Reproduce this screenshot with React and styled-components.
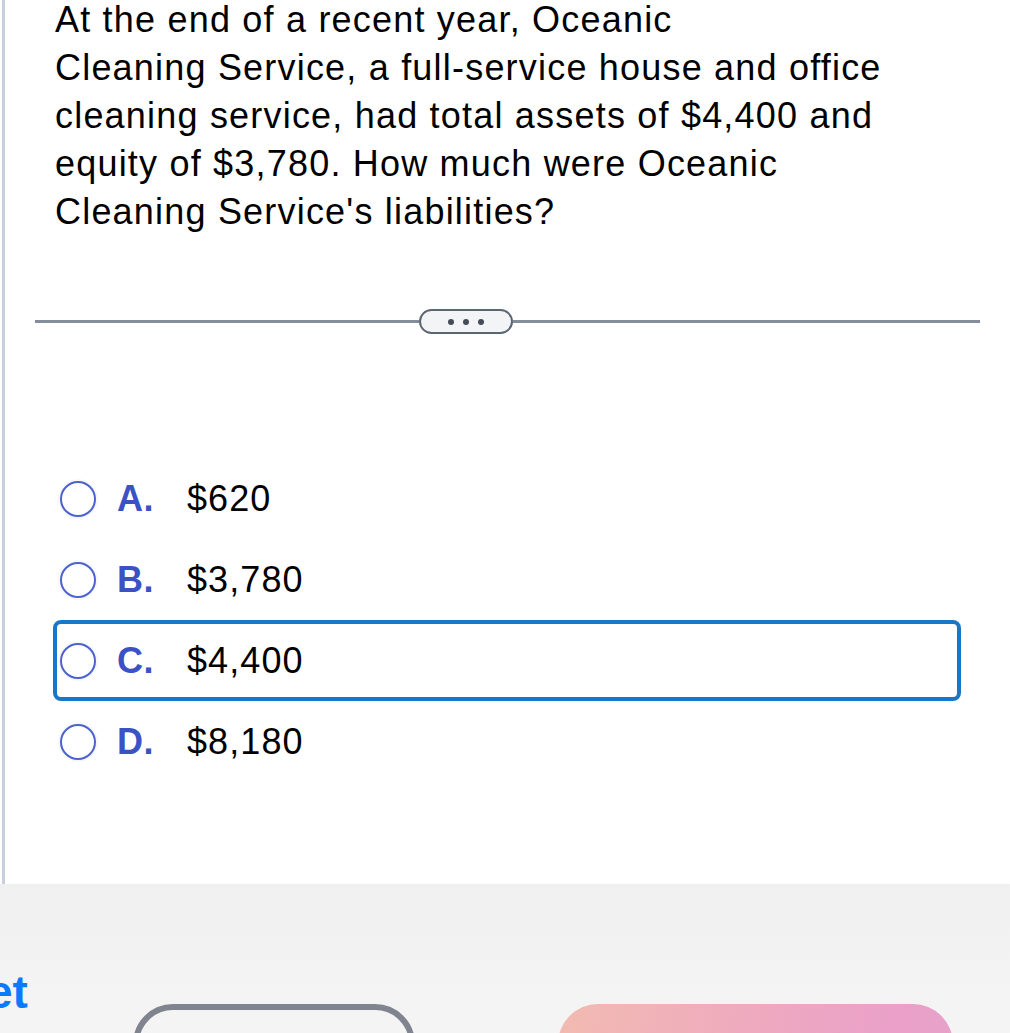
import React, { useState } from "react";
import styled, { createGlobalStyle } from "styled-components";

const GlobalStyle = createGlobalStyle`
  html, body {
    margin: 0;
    padding: 0;
    background: #ffffff;
    font-family: "Liberation Sans", Arial, Helvetica, sans-serif;
  }
`;

const choices = [
  { key: "A", value: "$620" },
  { key: "B", value: "$3,780" },
  { key: "C", value: "$4,400" },
  { key: "D", value: "$8,180" },
];

const App = () => {
  const [focused, setFocused] = useState("C");

  return (
    <>
      <GlobalStyle />
      <Page>
        <Main>
          <Question>
            At the end of a recent year, Oceanic
            <br />
            Cleaning Service, a full-service house and office
            <br />
            cleaning service, had total assets of $4,400 and
            <br />
            equity of $3,780. How much were Oceanic
            <br />
            Cleaning Service's liabilities?
          </Question>

          {/* divider with the expand pill */}
          <Divider>
            <Rule $fixed />
            <MorePill type="button" aria-label="more">
              <Dot />
              <Dot />
              <Dot />
            </MorePill>
            <Rule />
          </Divider>

          <Options>
            {choices.map((c) => (
              <Option
                key={c.key}
                $active={focused === c.key}
                onClick={() => setFocused(c.key)}
              >
                <Radio />
                <Letter>{c.key}.</Letter>
                <Value>{c.value}</Value>
              </Option>
            ))}
          </Options>
        </Main>

        <Footer>
          <Heading>et</Heading>
          <ButtonRow>
            <GhostButton type="button" />
            <GradientButton type="button" />
          </ButtonRow>
        </Footer>
      </Page>
    </>
  );
};

export default App;

const Page = styled.div`
  width: 1010px;
  height: 1033px;
  overflow: hidden;
  display: flex;
  flex-direction: column;
`;

const Main = styled.div`
  flex: none;
  height: 884px;
  margin-left: 2px;
  border-left: 3px solid #c9cfde;
  box-sizing: border-box;
  display: flex;
  flex-direction: column;
`;

const Question = styled.p`
  margin: -4px 0 0 50px;
  font-size: 36px;
  line-height: 48px;
  letter-spacing: 1.2px;
  color: #000;
  white-space: nowrap;
`;

const Divider = styled.div`
  margin: 73px 0 0 30px;
  width: 945px;
  height: 25px;
  display: flex;
  align-items: center;
`;

const Rule = styled.div`
  height: 3px;
  background: #858d9d;
  ${(p) => (p.$fixed ? "width: 384px; flex: none;" : "flex: 1;")}
`;

const MorePill = styled.button`
  width: 94px;
  height: 25px;
  box-sizing: border-box;
  border: 2px solid #5b6675;
  border-radius: 13px;
  background: #f3f4f6;
  display: flex;
  align-items: center;
  justify-content: center;
  gap: 9px;
  padding: 0;
`;

const Dot = styled.span`
  width: 6px;
  height: 6px;
  border-radius: 50%;
  background: #454c57;
`;

const Options = styled.div`
  margin: 124px 0 0 48px;
  width: 908px;
  display: flex;
  flex-direction: column;
`;

const Option = styled.div`
  height: 81px;
  box-sizing: border-box;
  border: 4px solid ${(p) => (p.$active ? "#1778c9" : "transparent")};
  border-radius: 8px;
  display: flex;
  align-items: center;
  padding-left: 3px;
  cursor: pointer;
`;

const Radio = styled.span`
  width: 36px;
  height: 36px;
  box-sizing: border-box;
  border-radius: 50%;
  border: 2.5px solid #4a63cf;
  box-shadow: 0 0 0 2px rgba(0, 0, 0, 0.03);
  background: #fff;
  flex: none;
`;

const Letter = styled.span`
  margin-left: 21px;
  width: 70px;
  font-size: 36px;
  font-weight: 700;
  letter-spacing: 0.6px;
  color: #3a52c4;
`;

const Value = styled.span`
  font-size: 36px;
  letter-spacing: 1.1px;
  color: #000;
`;

const Footer = styled.div`
  flex: 1;
  background: linear-gradient(#f0f0f0, #f6f6f6);
  display: flex;
  align-items: flex-start;
`;

const Heading = styled.h2`
  margin: 82px 0 0 -13px;
  font-size: 46px;
  line-height: 52px;
  font-weight: 700;
  color: #0a7bff;
`;

const ButtonRow = styled.div`
  margin: 120px 0 0 105px;
  display: flex;
  gap: 143px;
`;

const GhostButton = styled.button`
  width: 282px;
  height: 80px;
  box-sizing: border-box;
  border: 6px solid #80848e;
  border-radius: 40px;
  background: transparent;
`;

const GradientButton = styled.button`
  width: 395px;
  height: 80px;
  border: none;
  border-radius: 45px;
  background: linear-gradient(100deg, #f2bbb1 0%, #eea9bf 50%, #eaa0c9 85%, #e6a2c8 100%);
`;
